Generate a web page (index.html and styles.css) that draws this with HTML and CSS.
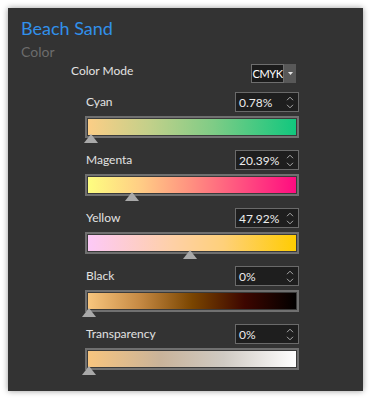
FILE: index.html
```html
<!DOCTYPE html>
<html>
<head>
<meta charset="utf-8">
<link rel="stylesheet" href="styles.css">
</head>
<body>
<div class="panel">
  <div class="title">Beach Sand</div>
  <div class="subtitle">Color</div>
  <div class="mode-row">
    <span class="label">Color Mode</span>
    <div class="dropdown">
      <span class="dd-value">CMYK</span>
      <span class="dd-btn"><svg width="5" height="3" viewBox="0 0 5 3"><path d="M0 0H5L2.5 3Z" fill="#e6e6e6"/></svg></span>
    </div>
  </div>

  <div class="section">
    <div class="head">
      <span class="label">Cyan</span>
      <div class="spin"><span class="val">0.78%</span><span class="arrows"><svg width="8" height="5" viewBox="0 0 8 5"><path d="M1 4.2L4 1.2L7 4.2" fill="none" stroke="#a8a8a8" stroke-width="1"/></svg><svg width="8" height="5" viewBox="0 0 8 5"><path d="M1 0.8L4 3.8L7 0.8" fill="none" stroke="#a8a8a8" stroke-width="1"/></svg></span></div>
    </div>
    <div class="bar g-cyan"><span class="thumb" style="left:1.6px"></span></div>
  </div>

  <div class="section">
    <div class="head">
      <span class="label">Magenta</span>
      <div class="spin"><span class="val">20.39%</span><span class="arrows"><svg width="8" height="5" viewBox="0 0 8 5"><path d="M1 4.2L4 1.2L7 4.2" fill="none" stroke="#a8a8a8" stroke-width="1"/></svg><svg width="8" height="5" viewBox="0 0 8 5"><path d="M1 0.8L4 3.8L7 0.8" fill="none" stroke="#a8a8a8" stroke-width="1"/></svg></span></div>
    </div>
    <div class="bar g-magenta"><span class="thumb" style="left:42.8px"></span></div>
  </div>

  <div class="section">
    <div class="head">
      <span class="label">Yellow</span>
      <div class="spin"><span class="val">47.92%</span><span class="arrows"><svg width="8" height="5" viewBox="0 0 8 5"><path d="M1 4.2L4 1.2L7 4.2" fill="none" stroke="#a8a8a8" stroke-width="1"/></svg><svg width="8" height="5" viewBox="0 0 8 5"><path d="M1 0.8L4 3.8L7 0.8" fill="none" stroke="#a8a8a8" stroke-width="1"/></svg></span></div>
    </div>
    <div class="bar g-yellow"><span class="thumb" style="left:100.6px"></span></div>
  </div>

  <div class="section">
    <div class="head">
      <span class="label">Black</span>
      <div class="spin"><span class="val">0%</span><span class="arrows"><svg width="8" height="5" viewBox="0 0 8 5"><path d="M1 4.2L4 1.2L7 4.2" fill="none" stroke="#a8a8a8" stroke-width="1"/></svg><svg width="8" height="5" viewBox="0 0 8 5"><path d="M1 0.8L4 3.8L7 0.8" fill="none" stroke="#a8a8a8" stroke-width="1"/></svg></span></div>
    </div>
    <div class="bar g-black"><span class="thumb" style="left:0px"></span></div>
  </div>

  <div class="section">
    <div class="head">
      <span class="label">Transparency</span>
      <div class="spin"><span class="val">0%</span><span class="arrows"><svg width="8" height="5" viewBox="0 0 8 5"><path d="M1 4.2L4 1.2L7 4.2" fill="none" stroke="#a8a8a8" stroke-width="1"/></svg><svg width="8" height="5" viewBox="0 0 8 5"><path d="M1 0.8L4 3.8L7 0.8" fill="none" stroke="#a8a8a8" stroke-width="1"/></svg></span></div>
    </div>
    <div class="bar g-trans"><span class="thumb" style="left:0px"></span></div>
  </div>
</div>
</body>
</html>
```

FILE: styles.css
```css
html, body {
  margin: 0;
  padding: 0;
  background: #ffffff;
}
body {
  padding: 8px;
  font-family: "Lato", "Open Sans", sans-serif;
}
.panel {
  width: 355px;
  height: 383px;
  box-sizing: border-box;
  background: #333333;
  box-shadow: 0 0 6px rgba(0, 0, 0, 0.4);
  padding: 8px 0 0 13px;
}
.title {
  color: #3190ea;
  font-size: 18px;
  line-height: 24px;
  height: 24px;
}
.subtitle {
  color: #6c6c6c;
  font-size: 14px;
  line-height: 18px;
  margin-top: 3px;
}
.mode-row {
  display: flex;
  align-items: flex-start;
  justify-content: space-between;
  width: 225px;
  margin-left: 50px;
  margin-top: 2px;
  height: 20px;
}
.label {
  color: #e2e2e2;
  font-size: 12px;
  line-height: 16px;
}
.dropdown {
  display: flex;
  height: 19px;
  margin-top: 1px;
}
.dd-value {
  box-sizing: border-box;
  width: 33px;
  height: 19px;
  background: #1b1b1b;
  border: 1px solid #6e6e6e;
  color: #ffffff;
  font-size: 11px;
  letter-spacing: -0.4px;
  line-height: 17px;
  text-align: center;
  white-space: nowrap;
  overflow: hidden;
}
.dd-btn {
  width: 12px;
  height: 19px;
  background: #585858;
  display: flex;
  align-items: center;
  justify-content: center;
}
.section {
  width: 214px;
  margin-left: 64px;
  margin-top: 9px;
  margin-bottom: 3.25px;
}
.section + .section {
  margin-top: 12px;
}
.head {
  display: flex;
  align-items: center;
  justify-content: space-between;
  height: 20px;
}
.head .label {
  padding-left: 1px;
}
.spin {
  box-sizing: border-box;
  width: 64px;
  height: 20px;
  background: #1e1e1e;
  border: 1px solid #6a6a6a;
  display: flex;
  align-items: center;
  justify-content: space-between;
  padding: 0 4px 0 3px;
}
.val {
  color: #ececec;
  font-size: 12px;
}
.arrows {
  display: flex;
  flex-direction: column;
  gap: 3px;
}
.arrows svg {
  display: block;
}
.bar {
  position: relative;
  box-sizing: border-box;
  height: 22px;
  margin-top: 4px;
  border: 2px solid #707070;
  box-shadow: inset 0 0 0 1px #3a3a3a;
}
.thumb {
  position: absolute;
  bottom: -7px;
  margin-left: -5px;
  width: 0;
  height: 0;
  border-left: 7px solid transparent;
  border-right: 7px solid transparent;
  border-bottom: 9px solid #a9a9a9;
}
.g-cyan {
  background: linear-gradient(to right, #fdce86, #c2d08a 30%, #7fcc86 60%, #10c77e);
}
.g-magenta {
  background: linear-gradient(to right, #feff80, #ffce85 25%, #ff8f80 50%, #ff0a80);
}
.g-yellow {
  background: linear-gradient(to right, #fdc9f8, #fed0a8 40%, #fed07a 65%, #ffcc00);
}
.g-black {
  background: linear-gradient(to right, #f9c77f, #c68a44 25%, #7a4500 50%, #3d0600 75%, #000000);
}
.g-trans {
  background: linear-gradient(to right, #f8c57e, #c9b39a 35%, #cfcac3 65%, #ffffff);
}
```
